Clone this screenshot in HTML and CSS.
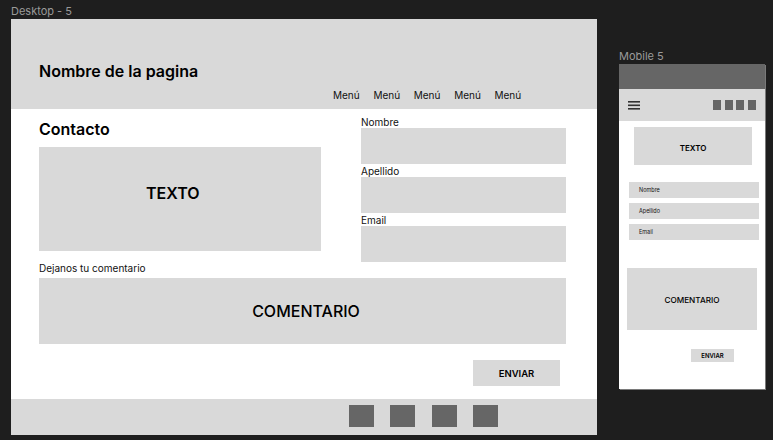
FILE: index.html
```html
<!DOCTYPE html>
<html lang="es">
<head>
<meta charset="utf-8">
<title>Wireframes</title>
<link rel="stylesheet" href="styles.css">
</head>
<body>
<div class="canvas">
  <section class="board board-desktop">
    <div class="board-label">Desktop - 5</div>
    <div class="frame desktop">
      <header class="d-header">
        <h1 class="d-title">Nombre de la pagina</h1>
        <nav class="d-nav">
          <span>Menú</span><span>Menú</span><span>Menú</span><span>Menú</span><span>Menú</span>
        </nav>
      </header>
      <main class="d-main">
        <div class="d-row">
          <div class="d-left">
            <h2 class="d-contact">Contacto</h2>
            <div class="d-text">TEXTO</div>
          </div>
          <div class="d-fields">
            <div class="d-label">Nombre</div>
            <div class="d-input"></div>
            <div class="d-label">Apellido</div>
            <div class="d-input"></div>
            <div class="d-label">Email</div>
            <div class="d-input d-input-last"></div>
          </div>
        </div>
        <div class="d-label d-comment-label">Dejanos tu comentario</div>
        <div class="d-comment">COMENTARIO</div>
        <div class="d-actions"><div class="d-send">ENVIAR</div></div>
      </main>
      <footer class="d-footer">
        <span class="sq"></span><span class="sq"></span><span class="sq"></span><span class="sq"></span>
      </footer>
    </div>
  </section>

  <section class="board board-mobile">
    <div class="board-label">Mobile 5</div>
    <div class="frame mobile">
      <div class="m-top"></div>
      <div class="m-nav">
        <svg class="m-burger" width="12" height="9" viewBox="0 0 12 9"><rect x="0" y="0" width="12" height="1.6" fill="#333"/><rect x="0" y="3.5" width="12" height="1.6" fill="#333"/><rect x="0" y="7" width="12" height="1.6" fill="#333"/></svg>
        <div class="m-icons"><span></span><span></span><span></span><span></span></div>
      </div>
      <div class="m-text">TEXTO</div>
      <div class="m-input m-input-first">Nombre</div>
      <div class="m-input">Apellido</div>
      <div class="m-input">Email</div>
      <div class="m-comment">COMENTARIO</div>
      <div class="m-send">ENVIAR</div>
    </div>
  </section>
</div>
</body>
</html>
```
FILE: styles.css
```css
html, body {
  margin: 0;
  padding: 0;
}
body {
  background: #1e1e1e;
  font-family: Inter, "Noto Sans", "Liberation Sans", sans-serif;
  color: #000;
  width: 773px;
  height: 440px;
  overflow: hidden;
}
.canvas {
  display: flex;
  align-items: flex-start;
  gap: 22px;
  padding-left: 11px;
}
.board-label {
  font-size: 11px;
  line-height: 13px;
  color: #9a9a9a;
  margin-bottom: 1px;
}
.board-desktop { padding-top: 5px; }
.board-mobile { padding-top: 50px; }

/* Desktop */
.desktop {
  width: 586px;
  height: 416px;
  background: #fff;
  display: flex;
  flex-direction: column;
}
.d-header {
  height: 90px;
  background: #d9d9d9;
  box-sizing: border-box;
  padding: 42px 0 0 28px;
}
.d-title {
  margin: 0;
  font-size: 16px;
  line-height: 20px;
  font-weight: 600;
}
.d-nav {
  display: flex;
  gap: 13.7px;
  margin: 7px 0 0 294px;
  font-size: 10px;
  line-height: 14px;
  color: #111;
}
.d-main {
  flex: 1;
  box-sizing: border-box;
  padding: 8px 31px 0 28px;
  display: flex;
  flex-direction: column;
}
.d-row {
  display: flex;
  gap: 40px;
}
.d-left { width: 282px; }
.d-contact {
  margin: 0 0 6px;
  font-size: 16px;
  line-height: 24px;
  font-weight: 600;
}
.d-text {
  height: 104px;
  background: #d9d9d9;
  box-sizing: border-box;
  padding: 36px 0 0 107px;
  font-size: 16px;
  line-height: 20px;
  font-weight: 600;
}
.d-fields {
  width: 205px;
  display: flex;
  flex-direction: column;
}
.d-label {
  font-size: 10px;
  line-height: 11px;
  color: #111;
}
.d-input {
  height: 36px;
  background: #d9d9d9;
  margin-bottom: 2px;
}
.d-input-last { margin-bottom: 0; }
.d-comment-label { margin: 1px 0 4px; }
.d-comment {
  height: 66px;
  box-sizing: border-box;
  padding-left: 7px;
  background: #d9d9d9;
  display: flex;
  align-items: center;
  justify-content: center;
  font-size: 16px;
  font-weight: 500;
}
.d-actions {
  display: flex;
  justify-content: flex-end;
  margin-top: 16px;
}
.d-send {
  width: 87px;
  height: 26px;
  margin-right: 6px;
  background: #d9d9d9;
  display: flex;
  align-items: center;
  justify-content: center;
  font-size: 9.5px;
  font-weight: 600;
}
.d-footer {
  height: 36px;
  background: #d9d9d9;
  box-sizing: border-box;
  padding: 6px 0 0 338px;
  display: flex;
  gap: 16.3px;
}
.sq {
  width: 25px;
  height: 22px;
  background: #666;
}

/* Mobile */
.mobile {
  width: 146px;
  height: 325px;
  background: #fff;
  display: flex;
  flex-direction: column;
  box-shadow: 1px 1px 0 #7a7a7a;
}
.m-top {
  height: 25px;
  background: #666;
}
.m-nav {
  height: 32px;
  background: #d9d9d9;
  display: flex;
  align-items: center;
  justify-content: space-between;
  padding: 0 9px;
}
.m-icons {
  display: flex;
  gap: 3.67px;
}
.m-icons span {
  width: 8px;
  height: 10px;
  background: #666;
}
.m-text {
  margin: 6px 0 0 15px;
  width: 118px;
  height: 38px;
  box-sizing: border-box;
  padding-top: 3px;
  background: #d9d9d9;
  display: flex;
  align-items: center;
  justify-content: center;
  font-size: 8px;
  font-weight: 600;
}
.m-input {
  margin: 5px 0 0 10px;
  width: 130px;
  height: 16px;
  box-sizing: border-box;
  padding-left: 10px;
  background: #d9d9d9;
  display: flex;
  align-items: center;
  font-size: 5.5px;
  color: #111;
}
.m-input-first { margin-top: 17px; }
.m-comment {
  margin: 28px 0 0 8px;
  width: 130px;
  height: 62px;
  box-sizing: border-box;
  padding-top: 1px;
  background: #d9d9d9;
  display: flex;
  align-items: center;
  justify-content: center;
  font-size: 8.2px;
  font-weight: 500;
}
.m-send {
  margin: 19px 0 0 72px;
  width: 43px;
  height: 13px;
  background: #d9d9d9;
  display: flex;
  align-items: center;
  justify-content: center;
  font-size: 6px;
  font-weight: 600;
}
```
